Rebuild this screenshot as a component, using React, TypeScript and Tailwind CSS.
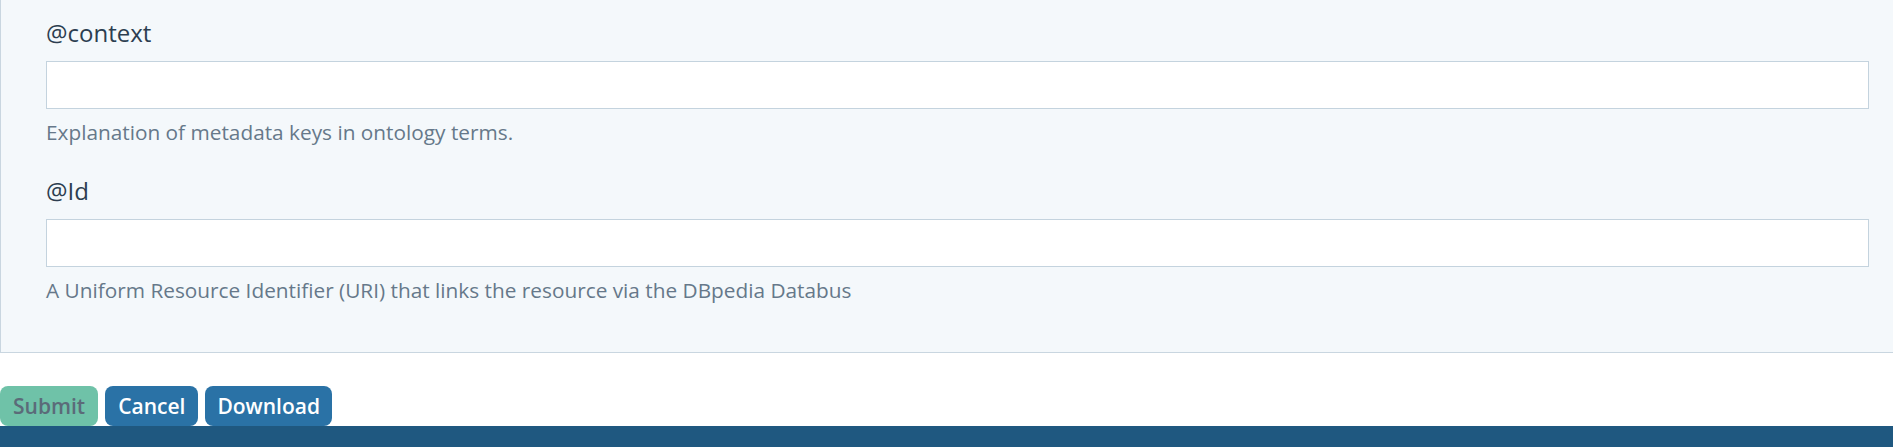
import React from "react";

function Field({ label, help }: { label: string; help: string }) {
  return (
    <div className="flex flex-col">
      <label className="text-[24px] leading-[36px] text-[#2c3e50] mb-[10px]">{label}</label>
      <input
        type="text"
        className="h-[48px] w-full bg-white border border-[#c4d3de] outline-none px-3"
      />
      <div className="mt-[8px] text-[20.8px] leading-[30px] text-[#66788a]">{help}</div>
    </div>
  );
}

export default function App() {
  return (
    <div
      className="w-[1893px] h-[447px] overflow-hidden bg-white flex flex-col"
      style={{ fontFamily: '"Open Sans", "Noto Sans", sans-serif' }}
    >
      <div className="w-[1914px] bg-[#f4f8fb] border-l border-b border-[#c9d6e0] pl-[45px] pr-[45px] pt-[15px] pb-[47px] flex flex-col gap-[26px]">
        <Field label="@context" help="Explanation of metadata keys in ontology terms." />
        <Field
          label="@Id"
          help="A Uniform Resource Identifier (URI) that links the resource via the DBpedia Databus"
        />
      </div>
      <div className="mt-[33px] flex gap-[7px]">
        <button className="h-[40px] px-[13px] rounded-[8px] bg-[#6fc2a8] text-[#5b6b79] text-[21px] font-semibold leading-none">
          Submit
        </button>
        <button className="h-[40px] px-[13px] rounded-[8px] bg-[#2a72a6] text-white text-[21px] font-semibold leading-none">
          Cancel
        </button>
        <button className="h-[40px] px-[12px] rounded-[8px] bg-[#2a72a6] text-white text-[21px] font-semibold leading-none">
          Download
        </button>
      </div>
      <div className="flex-1 bg-[#1f5880]" />
    </div>
  );
}
